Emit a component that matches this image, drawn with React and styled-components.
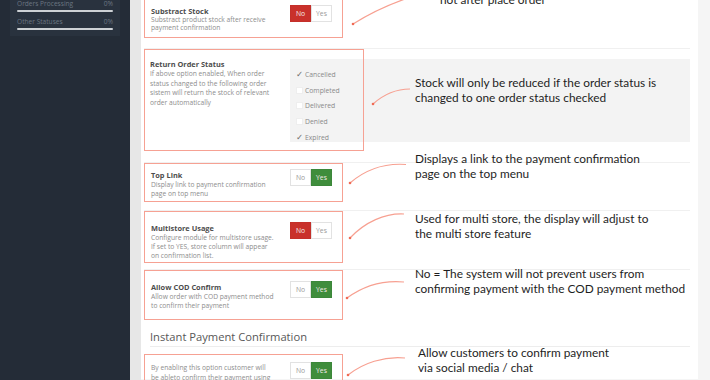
import React from "react";
import styled, { createGlobalStyle } from "styled-components";

const GlobalStyle = createGlobalStyle`
  html, body {
    margin: 0;
    padding: 0;
  }
  body {
    width: 710px;
    height: 380px;
    overflow: hidden;
    background: #f5f5f5;
    font-family: "Open Sans", "Liberation Sans", sans-serif;
  }
`;

const Page = styled.div`
  position: relative;
  display: flex;
  width: 710px;
  height: 380px;
  overflow: hidden;
`;

const Sidebar = styled.aside`
  width: 130px;
  flex: none;
  background: #242c37;
  padding: 0 10px;
  box-sizing: border-box;
`;

const StatCard = styled.div`
  background: #29323e;
  margin-top: -1px;
  padding: 0 7px 6px;
  display: flex;
  flex-direction: column;
  gap: 5px;
`;

const Stat = styled.div`
  display: flex;
  flex-direction: column;
`;

const StatHead = styled.div`
  display: flex;
  justify-content: space-between;
  font-size: 6.6px;
  line-height: 10px;
  color: #6b7682;
`;

const StatBar = styled.div`
  height: 2px;
  margin-top: 1px;
  background: #cdd1d5;
  border-radius: 1px;
`;

const Main = styled.main`
  flex: 1;
  background: #f5f5f5;
  border-left: 11px solid #e7e7e7;
  padding-right: 12px;
`;

const Panel = styled.section`
  background: #fff;
  height: 100%;
  margin-top: -1px;
  padding: 0 8px 0 3px;
`;

const Row = styled.div`
  position: relative;
  border-top: ${(p) => (p.$plain ? "none" : "1px solid #f0f0f0")};
  padding-bottom: ${(p) => p.$pb}px;
`;

const Highlight = styled.div`
  display: flex;
  align-items: flex-start;
  width: 199px;
  box-sizing: border-box;
  border: 1.5px solid #f6a193;
  padding: ${(p) => p.$pt}px 6px ${(p) => p.$pb}px;
`;

const Frame = styled.div`
  position: absolute;
  left: 0;
  top: 0;
  width: 220px;
  height: 102px;
  box-sizing: border-box;
  border: 1.5px solid #f6a193;
  pointer-events: none;
`;

const LabelCol = styled.div`
  width: ${(p) => p.$w || 139}px;
  flex: none;
`;

const Title = styled.div`
  font-size: 7.4px;
  font-weight: 700;
  line-height: 10px;
  color: #4d4d4d;
`;

const Desc = styled.div`
  font-size: 6.7px;
  line-height: ${(p) => p.$lh || 9}px;
  color: #8d8d8d;
`;

const Toggle = styled.div`
  display: flex;
  margin-top: -1px;
`;

const ToggleBtn = styled.div`
  width: 21px;
  height: 17px;
  box-sizing: border-box;
  display: flex;
  align-items: center;
  justify-content: center;
  font-size: 6.8px;
  border: 1px solid
    ${(p) => (p.$on ? (p.$tone === "no" ? "#c4302a" : "#3c873a") : "#e2e2e2")};
  background: ${(p) =>
    p.$on ? (p.$tone === "no" ? "#c9312b" : "#3f8d3c") : "#fff"};
  color: ${(p) => (p.$on ? "#f4e9e8" : "#9a9a9a")};
`;

const ReturnLayout = styled.div`
  display: flex;
  align-items: flex-start;
  padding: 10px 0 9px 6px;
`;

const CheckPanel = styled.div`
  flex: 1;
  height: 83px;
  box-sizing: border-box;
  background: #f3f3f3;
  padding: 11px 6px 0;
  display: flex;
  flex-direction: column;
  gap: 5.7px;
  overflow: hidden;
`;

const CheckItem = styled.label`
  display: flex;
  align-items: center;
  gap: 2px;
  height: 10px;
  font-size: 6.8px;
  color: #8a8a8a;
`;

const Box = styled.span`
  width: 7px;
  height: 7px;
  flex: none;
  box-sizing: border-box;
  display: flex;
  align-items: center;
  justify-content: center;
  background: ${(p) => (p.$checked ? "transparent" : "#fff")};
  border: ${(p) => (p.$checked ? "none" : "1px solid #eeeeee")};
  color: #6f6f6f;
  font-size: 8.5px;
  line-height: 7px;
  font-family: "DejaVu Sans", sans-serif;
`;

const SectionHead = styled.h3`
  margin: 9px 0 7px 6px;
  padding-bottom: 1px;
  font-size: 11.2px;
  font-weight: 400;
  line-height: 16px;
  color: #585858;
  border-bottom: 1px solid #ededed;
`;

const Overlay = styled.svg`
  position: absolute;
  left: 0;
  top: 0;
  pointer-events: none;
`;

const Note = styled.div`
  position: absolute;
  left: ${(p) => p.$x}px;
  top: ${(p) => p.$y}px;
  font-family: "Lato", "Open Sans", sans-serif;
  font-size: 11.85px;
  line-height: 14.5px;
  color: #1e1e1e;
  white-space: nowrap;
`;

function Switch({ value }) {
  return (
    <Toggle>
      <ToggleBtn $tone="no" $on={value === "no"}>No</ToggleBtn>
      <ToggleBtn $tone="yes" $on={value === "yes"}>Yes</ToggleBtn>
    </Toggle>
  );
}

function Stats() {
  return (
    <StatCard>
      {["Orders Processing", "Other Statuses"].map((name) => (
        <Stat key={name}>
          <StatHead>
            <span>{name}</span>
            <span>0%</span>
          </StatHead>
          <StatBar />
        </Stat>
      ))}
    </StatCard>
  );
}

const statuses = [
  { name: "Cancelled", checked: true },
  { name: "Completed", checked: false },
  { name: "Delivered", checked: false },
  { name: "Denied", checked: false },
  { name: "Expired", checked: true },
];

const notes = [
  { x: 440, y: -7, lines: ["not after place order"], arrow: "M353 24 C372 12 392 3 414 -4", dot: [353, 24] },
  {
    x: 415,
    y: 76,
    lines: ["Stock will only be reduced if the order status is", "changed to one order status checked"],
    arrow: "M373 104 C383 95 394 89 410 89",
    dot: [373, 104],
  },
  {
    x: 415,
    y: 152,
    lines: ["Displays a link to the payment confirmation", "page on the top menu"],
    arrow: "M350 183 C365 170 385 163 406 164.5",
    dot: [350, 183],
  },
  {
    x: 415,
    y: 212,
    lines: ["Used for multi store, the display will adjust to", "the multi store feature"],
    arrow: "M350 238 C365 222 385 213 404 214",
    dot: [350, 238],
  },
  {
    x: 415,
    y: 267,
    lines: ["No = The system will not prevent users from", "confirming payment with the COD payment method"],
    arrow: "M347 298 C362 287 382 280 404 282",
    dot: [347, 298],
  },
  {
    x: 418,
    y: 346,
    lines: ["Allow customers to confirm payment", "via social media / chat"],
    arrow: "M348 375 C363 363 384 356 405 358",
    dot: [348, 375],
  },
];

function Callouts() {
  return (
    <>
      <Overlay width="710" height="380" viewBox="0 0 710 380">
        {notes.map((n, i) => (
          <g key={i}>
            <path d={n.arrow} fill="none" stroke="#f7a091" strokeWidth="1.2" />
            <circle cx={n.dot[0]} cy={n.dot[1]} r="1.3" fill="#f06b55" />
          </g>
        ))}
      </Overlay>
      {notes.map((n, i) => (
        <Note key={i} $x={n.x} $y={n.y}>
          {n.lines.map((l) => (
            <div key={l}>{l}</div>
          ))}
        </Note>
      ))}
    </>
  );
}

export default function App() {
  return (
    <Page>
      <GlobalStyle />
      <Sidebar>
        <Stats />
      </Sidebar>
      <Main>
        <Panel>
          <Row $pb={10} $plain>
            <Highlight $pt={5.5} $pb={4.5}>
              <LabelCol>
                <Title>Substract Stock</Title>
                <Desc $lh={8.5}>
                  Substract product stock after receive
                  <br />
                  payment confirmation
                </Desc>
              </LabelCol>
              <Switch value="no" />
            </Highlight>
          </Row>

          <Row $pb={11}>
            <Frame />
            <ReturnLayout>
              <LabelCol $w={140}>
                <Title>Return Order Status</Title>
                <Desc $lh={9.6}>
                  If above option enabled, When order
                  <br />
                  status changed to the following order
                  <br />
                  sistem will return the stock of relevant
                  <br />
                  order automatically
                </Desc>
              </LabelCol>
              <CheckPanel>
                {statuses.map((s) => (
                  <CheckItem key={s.name}>
                    <Box $checked={s.checked}>{s.checked ? "✓" : ""}</Box>
                    {s.name}
                  </CheckItem>
                ))}
              </CheckPanel>
            </ReturnLayout>
          </Row>

          <Row $pb={8}>
            <Highlight $pt={5.5} $pb={3.5}>
              <LabelCol>
                <Title>Top Link</Title>
                <Desc>
                  Display link to payment confirmation
                  <br />
                  page on top menu
                </Desc>
              </LabelCol>
              <Switch value="yes" />
            </Highlight>
          </Row>

          <Row $pb={6}>
            <Highlight $pt={10.5} $pb={2}>
              <LabelCol>
                <Title>Multistore Usage</Title>
                <Desc>
                  Configure module for multistore usage.
                  <br />
                  If set to YES, store column will appear
                  <br />
                  on confirmation list.
                </Desc>
              </LabelCol>
              <Switch value="no" />
            </Highlight>
          </Row>

          <Row $pb={0}>
            <Highlight $pt={11.5} $pb={9}>
              <LabelCol>
                <Title>Allow COD Confirm</Title>
                <Desc>
                  Allow order with COD payment method
                  <br />
                  to confirm their payment
                </Desc>
              </LabelCol>
              <Switch value="yes" />
            </Highlight>
          </Row>

          <SectionHead>Instant Payment Confirmation</SectionHead>

          <Row $pb={0} $plain>
            <Highlight $pt={8} $pb={6}>
              <LabelCol>
                <Desc $lh={10}>
                  By enabling this option customer will
                  <br />
                  be ableto confirm their payment using
                </Desc>
              </LabelCol>
              <Switch value="yes" />
            </Highlight>
          </Row>
        </Panel>
      </Main>
      <Callouts />
    </Page>
  );
}
